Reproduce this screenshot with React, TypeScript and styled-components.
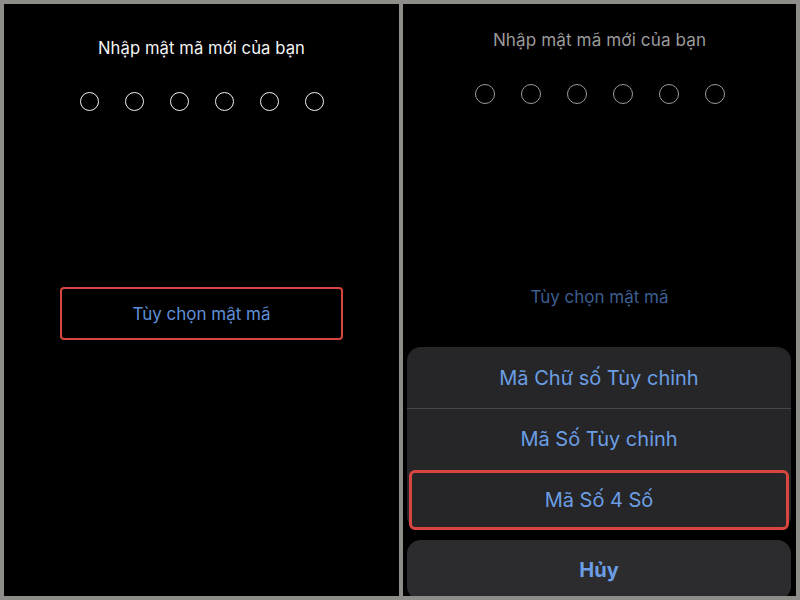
import React from "react";
import styled, { createGlobalStyle } from "styled-components";

const Global = createGlobalStyle`
  html, body { margin: 0; padding: 0; background: #8d8c88; }
  body { font-family: Inter, "Noto Sans", "Liberation Sans", sans-serif; }
`;

const Frame = styled.div`
  width: 800px;
  height: 600px;
  box-sizing: border-box;
  padding: 4px;
  display: grid;
  grid-template-columns: 395px 393px;
  column-gap: 4px;
  background: #8d8c88;
`;

const Screen = styled.div`
  background: #000;
  display: flex;
  flex-direction: column;
  align-items: center;
  overflow: hidden;
  position: relative;
`;

const Title = styled.div<{ $dim?: boolean; $top: number; $size: number }>`
  margin-top: ${(p) => p.$top}px;
  height: 24px;
  line-height: 24px;
  font-size: ${(p) => p.$size}px;
  color: ${(p) => (p.$dim ? "#9b9b9b" : "#f4f4f4")};
  letter-spacing: 0.1px;
`;

const Dots = styled.div<{ $gap: number; $top: number }>`
  display: flex;
  gap: ${(p) => p.$gap}px;
  margin-top: ${(p) => p.$top}px;
`;

const Dot = styled.div<{ $dim?: boolean; $size: number }>`
  width: ${(p) => p.$size}px;
  height: ${(p) => p.$size}px;
  box-sizing: border-box;
  border-radius: 50%;
  border: 1.5px solid ${(p) => (p.$dim ? "#9a9a9a" : "#f2f2f2")};
`;

const OptionBox = styled.div`
  margin-top: 176px;
  width: 283px;
  height: 53px;
  box-sizing: border-box;
  border: 2.5px solid #d8463f;
  border-radius: 4px;
  display: flex;
  align-items: center;
  justify-content: center;
  font-size: 17px;
  color: #5f8fd6;
`;

const DimOption = styled.div`
  margin-top: 181px;
  height: 24px;
  line-height: 24px;
  font-size: 17px;
  color: #3c5e91;
`;

const Sheet = styled.div`
  margin-top: 38px;
  width: 384px;
  align-self: flex-start;
  margin-left: 4px;
  background: #262628;
  border-radius: 14px;
  display: flex;
  flex-direction: column;
`;

const SheetRow = styled.div<{ $divider?: boolean }>`
  height: 61px;
  box-sizing: border-box;
  display: flex;
  align-items: center;
  justify-content: center;
  font-size: 20px;
  color: #6b9ee4;
  border-top: ${(p) => (p.$divider ? "1px solid #48484a" : "none")};
  position: relative;
`;

const Mark = styled.div`
  position: absolute;
  left: 2px;
  right: 2px;
  top: 1px;
  bottom: 0;
  border: 3px solid #d8463f;
  border-radius: 6px;
`;

const Cancel = styled.div`
  margin-top: 10px;
  width: 384px;
  height: 60px;
  align-self: flex-start;
  margin-left: 4px;
  flex-shrink: 0;
  background: #2c2c2e;
  border-radius: 14px;
  display: flex;
  align-items: center;
  justify-content: center;
  font-size: 20px;
  font-weight: 700;
  color: #6b9ee4;
  box-sizing: border-box;
`;

export default function App() {
  const dots = [0, 1, 2, 3, 4, 5];
  return (
    <>
      <Global />
      <Frame>
        <Screen>
          <Title $top={32} $size={16.6}>Nhập mật mã mới của bạn</Title>
          <Dots $gap={26} $top={32}>
            {dots.map((d) => (
              <Dot key={d} $size={19} />
            ))}
          </Dots>
          <OptionBox>Tùy chọn mật mã</OptionBox>
        </Screen>
        <Screen>
          <Title $dim $top={24} $size={17.1}>Nhập mật mã mới của bạn</Title>
          <Dots $gap={26} $top={32}>
            {dots.map((d) => (
              <Dot key={d} $dim $size={20} />
            ))}
          </Dots>
          <DimOption>Tùy chọn mật mã</DimOption>
          <Sheet>
            <SheetRow>Mã Chữ số Tùy chỉnh</SheetRow>
            <SheetRow $divider>Mã Số Tùy chỉnh</SheetRow>
            <SheetRow>
              <Mark />
              Mã Số 4 Số
            </SheetRow>
          </Sheet>
          <Cancel>Hủy</Cancel>
        </Screen>
      </Frame>
    </>
  );
}
